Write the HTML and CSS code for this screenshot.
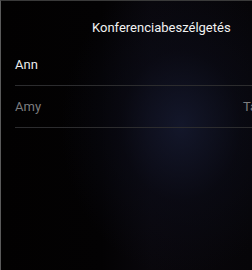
FILE: index.html
```html
<!DOCTYPE html>
<html lang="hu">

<head>
  <meta charset="UTF-8">
  <meta name="viewport" content="width=device-width, initial-scale=1.0">
  <title>Konferenciabeszélgetés</title>
  <link rel="stylesheet" href="styles.css">
</head>

<body>
<div class="screen">
  <h1 class="title">Konferenciabeszélgetés</h1>
  <ul class="list">
    <li class="row active">
      <span class="name">Ann</span>
    </li>
    <li class="row muted">
      <span class="name">Amy</span>
      <span class="action">Tartás</span>
    </li>
  </ul>
</div>
</body>

</html>
```

FILE: styles.css
```css
html, body {
  margin: 0;
  height: 100%;
  overflow: hidden;
  background: #030203;
}

body {
  font-family: Roboto, 'Noto Sans', sans-serif;
}

.screen {
  box-sizing: border-box;
  height: 100%;
  border-top: 1px solid #3a3a3a;
  border-left: 1px solid #5a5a5a;
  background:
    radial-gradient(ellipse 120px 150px at 180px 125px, rgba(24, 30, 56, 0.7), rgba(12, 14, 28, 0.45) 50%, rgba(0, 0, 0, 0) 100%),
    linear-gradient(90deg, #020101 0%, #030203 40%, #09070c 60%, #060508 100%);
}

.title {
  margin: 0;
  padding: 19px 0 0 91px;
  height: 24px;
  font-size: 13px;
  font-weight: 400;
  line-height: 16px;
  color: #f2f2f2;
  white-space: nowrap;
}

.list {
  list-style: none;
  margin: 0;
  padding: 0 0 0 14px;
}

.row {
  display: flex;
  align-items: center;
  height: 41px;
  border-bottom: 1px solid #2c2c2e;
  font-size: 13px;
  white-space: nowrap;
}

.active {
  color: #ececec;
}

.muted {
  color: #7c7c7e;
}

.name {
  flex: 0 0 228px;
}

.action {
  flex: none;
}
```
